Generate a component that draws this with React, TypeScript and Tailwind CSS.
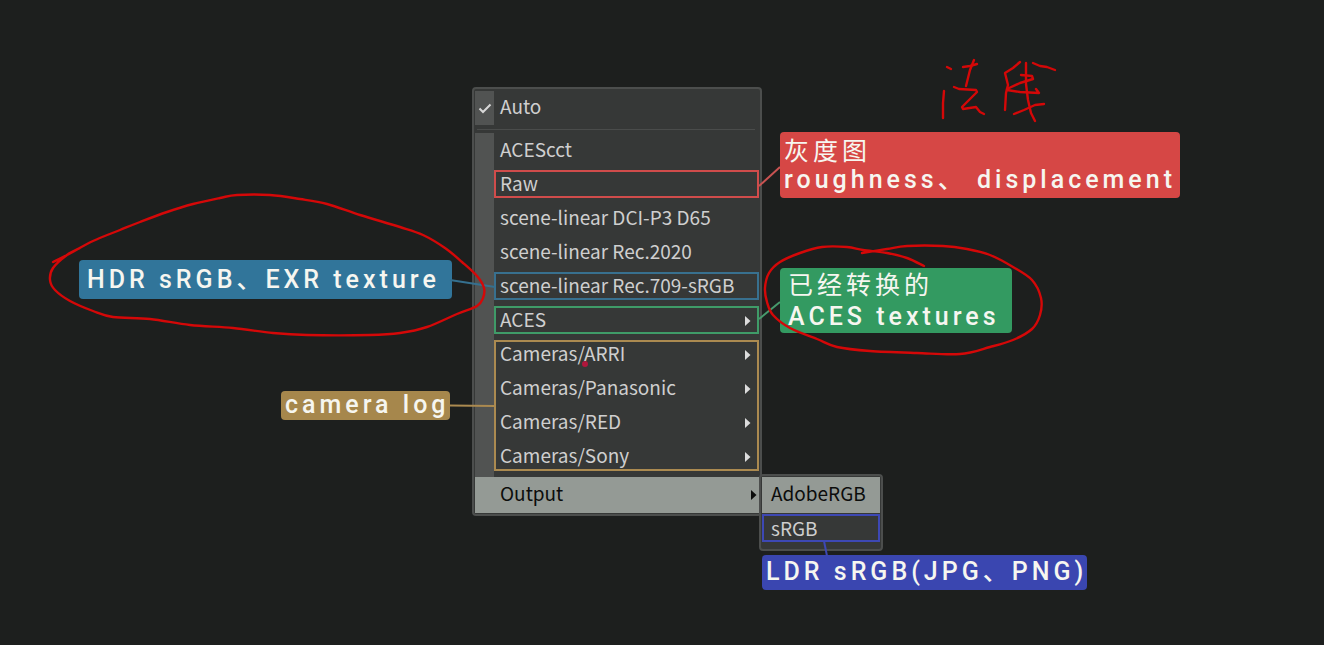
import React from "react";

type Point = [number, number];

/** Catmull-Rom spline through the points, as cubic Bézier segments. */
function smooth(points: Point[]): string {
  let d = `M${points[0][0]} ${points[0][1]}`;
  for (let i = 0; i < points.length - 1; i++) {
    const p0 = points[Math.max(i - 1, 0)];
    const p1 = points[i];
    const p2 = points[i + 1];
    const p3 = points[Math.min(i + 2, points.length - 1)];
    d += ` C${p1[0] + (p2[0] - p0[0]) / 6} ${p1[1] + (p2[1] - p0[1]) / 6} ${
      p2[0] - (p3[0] - p1[0]) / 6
    } ${p2[1] - (p3[1] - p1[1]) / 6} ${p2[0]} ${p2[1]}`;
  }
  return d;
}

const leftLoop: Point[] = [
  [53, 262], [67, 255], [93, 241], [120, 230], [140, 222], [167, 212], [193, 204], [220, 198],
  [237, 195], [270, 195], [300, 199], [327, 204], [360, 215], [400, 227], [423, 235], [445, 248],
  [462, 262], [477, 276], [484, 288], [483, 298], [477, 306], [457, 314], [427, 327], [400, 333],
  [370, 335], [307, 335], [273, 333], [233, 328], [190, 325], [150, 319], [113, 317], [93, 311],
  [70, 301], [55, 290], [50, 280], [53, 268], [67, 255], [80, 248],
];

const rightLoop: Point[] = [
  [924, 266], [907, 258], [887, 253], [863, 250], [847, 247], [822, 247], [800, 253], [780, 262],
  [769, 273], [765, 288], [767, 302], [773, 315], [790, 328], [817, 339], [837, 347], [870, 351],
  [917, 353], [960, 354], [990, 347], [1013, 340], [1032, 329], [1040, 315], [1041, 298],
  [1032, 280], [1013, 267], [990, 255], [967, 249], [943, 246], [907, 246], [887, 249], [862, 253],
];

const scribble = [
  "M947 67L951 69",
  "M944 91L943 103L943 118",
  "M963 67L970 66L977 64",
  "M974 60L970 70L966 86",
  "M954 87L959 89L976 90L977 92L962 107L963 109L976 107L980 112L984 114",
  "M1020 62L1013 68L1005 73L1008 85L1006 93L1005 110",
  "M1026 63L1026 84L1028 100L1031 113L1035 121",
  "M1007 89L1020 83L1033 79L1032 76L1021 75",
  "M1007 90L1020 92L1039 93L1036 89",
  "M1014 114L1024 110L1035 105L1044 104",
  "M1033 63L1040 66L1047 67L1055 70",
];

function Arrow({ className }: { className: string }) {
  return (
    <svg viewBox="0 0 6 12" className={`mt-1 h-3 w-1.5 shrink-0 fill-current ${className}`} aria-hidden="true">
      <path d="M0 1L5.5 6L0 11Z" />
    </svg>
  );
}

function Item({ text, arrow = false }: { text: string; arrow?: boolean }) {
  return (
    <button type="button" role="menuitem" className="flex h-[34px] w-full items-center justify-between pr-2 pb-0.5 pl-1.5 text-left">
      {text}
      {arrow && <Arrow className="text-[#dcdcdc]" />}
    </button>
  );
}

function BoxedItem({ text, border, arrow = false }: { text: string; border: string; arrow?: boolean }) {
  return (
    <button
      type="button"
      role="menuitem"
      className={`my-[3px] flex h-7 w-full items-center justify-between border-2 pr-1.5 pb-0.5 pl-1 text-left ${border}`}
    >
      {text}
      {arrow && <Arrow className="text-[#dcdcdc]" />}
    </button>
  );
}

function Menu() {
  return (
    <div
      role="menu"
      className="absolute top-[87px] left-[472px] w-[290px] rounded-sm border-2 border-[#4c4e4d] bg-[#363837] px-px pt-0.5 pb-px"
    >
      <button type="button" role="menuitem" className="flex h-[34px] w-full items-stretch text-left">
        <span className="flex w-[19px] items-center justify-center bg-[#515352]">
          <svg viewBox="0 0 14 12" className="h-3 w-3.5 fill-none stroke-[#d8d8d8] stroke-2" aria-hidden="true">
            <path d="M1.5 6.5L5 10L12.5 2.5" />
          </svg>
        </span>
        <span className="pt-[3px] pl-1.5">Auto</span>
      </button>
      <div className="mr-1 ml-0.5 flex h-2 items-center">
        <div className="h-px w-full bg-[#4a4c4b]" />
      </div>
      <div className="flex">
        <div className="w-[19px] shrink-0 bg-[#515352]" />
        <div className="flex flex-1 flex-col pb-1">
          <Item text="ACEScct" />
          <BoxedItem text="Raw" border="border-[#d04c4b]" />
          <Item text="scene-linear DCI-P3 D65" />
          <Item text="scene-linear Rec.2020" />
          <BoxedItem text="scene-linear Rec.709-sRGB" border="border-[#38708f]" />
          <BoxedItem text="ACES" border="border-[#3f9b68]" arrow />
          <div role="group" className="relative">
            <Item text="Cameras/ARRI" arrow />
            <Item text="Cameras/Panasonic" arrow />
            <Item text="Cameras/RED" arrow />
            <Item text="Cameras/Sony" arrow />
            <div className="pointer-events-none absolute inset-x-0 top-[3px] bottom-[2px] border-2 border-[#ab8a50]" />
          </div>
        </div>
      </div>
      <button
        type="button"
        role="menuitem"
        className="flex h-9 w-full items-center justify-between bg-[#949a95] pr-0.5 pb-1 pl-[25px] text-left text-[#0c0d0c]"
      >
        Output
        <Arrow className="text-[#0c0d0c]" />
      </button>
    </div>
  );
}

function SubMenu() {
  return (
    <div
      role="menu"
      className="absolute top-[474px] left-[759px] w-[124px] rounded-sm border-2 border-[#4c4e4d] bg-[#363837] px-px pt-px pb-[7px]"
    >
      <button type="button" role="menuitem" className="flex h-9 w-full items-center bg-[#949a95] pb-1 pl-[9px] text-[#0c0d0c]">
        AdobeRGB
      </button>
      <button type="button" role="menuitem" className="mt-px flex h-7 w-full items-center border-2 border-[#3d48b4] pl-[7px]">
        sRGB
      </button>
    </div>
  );
}

function Label({ className, children }: { className: string; children: React.ReactNode }) {
  return (
    <div
      className={`absolute rounded font-[Roboto,'Noto_Sans_CJK_SC',sans-serif] text-[25px] leading-7 font-medium tracking-[4px] whitespace-nowrap text-[#f6f6f0] ${className}`}
    >
      {children}
    </div>
  );
}

export default function App() {
  return (
    <main className="relative min-h-screen w-full overflow-hidden bg-[#1d1f1e] font-['Noto_Sans_CJK_SC',sans-serif] text-[19px] leading-6 text-[#cfcfcf]">
      <Menu />
      <SubMenu />

      <Label className="top-[132px] left-[780px] bg-[#d64745] px-1 pt-1.5 pb-1">
        <p className="font-normal">灰度图</p>
        <p>roughness、 displacement</p>
      </Label>
      <Label className="top-[268px] left-[780px] bg-[#339a61] pt-1 pr-3 pb-0.5 pl-2">
        <p className="font-normal">已经转换的</p>
        <p className="pt-[3px]">ACES textures</p>
      </Label>
      <Label className="top-[260px] left-[79px] bg-[#31759a] pt-1.5 pr-3 pb-[5px] pl-2">HDR sRGB、EXR texture</Label>
      <Label className="top-[391px] left-[281px] bg-[#a6874c] pb-px pl-1">camera log</Label>
      <Label className="top-[555px] left-[762px] bg-[#3a46b0] pt-[3px] pb-1 pl-1">LDR sRGB(JPG、PNG)</Label>

      <svg className="pointer-events-none absolute inset-0 size-full fill-none" aria-hidden="true">
        <g strokeWidth="2">
          <path d="M759 186L780 167" stroke="#c95352" />
          <path d="M450 280L495 287" stroke="#35708f" />
          <path d="M759 319L780 302" stroke="#479a6c" />
          <path d="M450 405.5L495 406" stroke="#ab8a50" />
          <path d="M824 541L827 556" stroke="#3d48b4" />
        </g>
        <g stroke="#d40808" strokeWidth="2.4" strokeLinecap="round" strokeLinejoin="round">
          <path d={smooth(leftLoop)} />
          <path d={smooth(rightLoop)} />
          {scribble.map((d) => (
            <path key={d} d={d} />
          ))}
        </g>
        <circle cx="585" cy="364" r="3" fill="#b0173c" />
      </svg>
    </main>
  );
}
